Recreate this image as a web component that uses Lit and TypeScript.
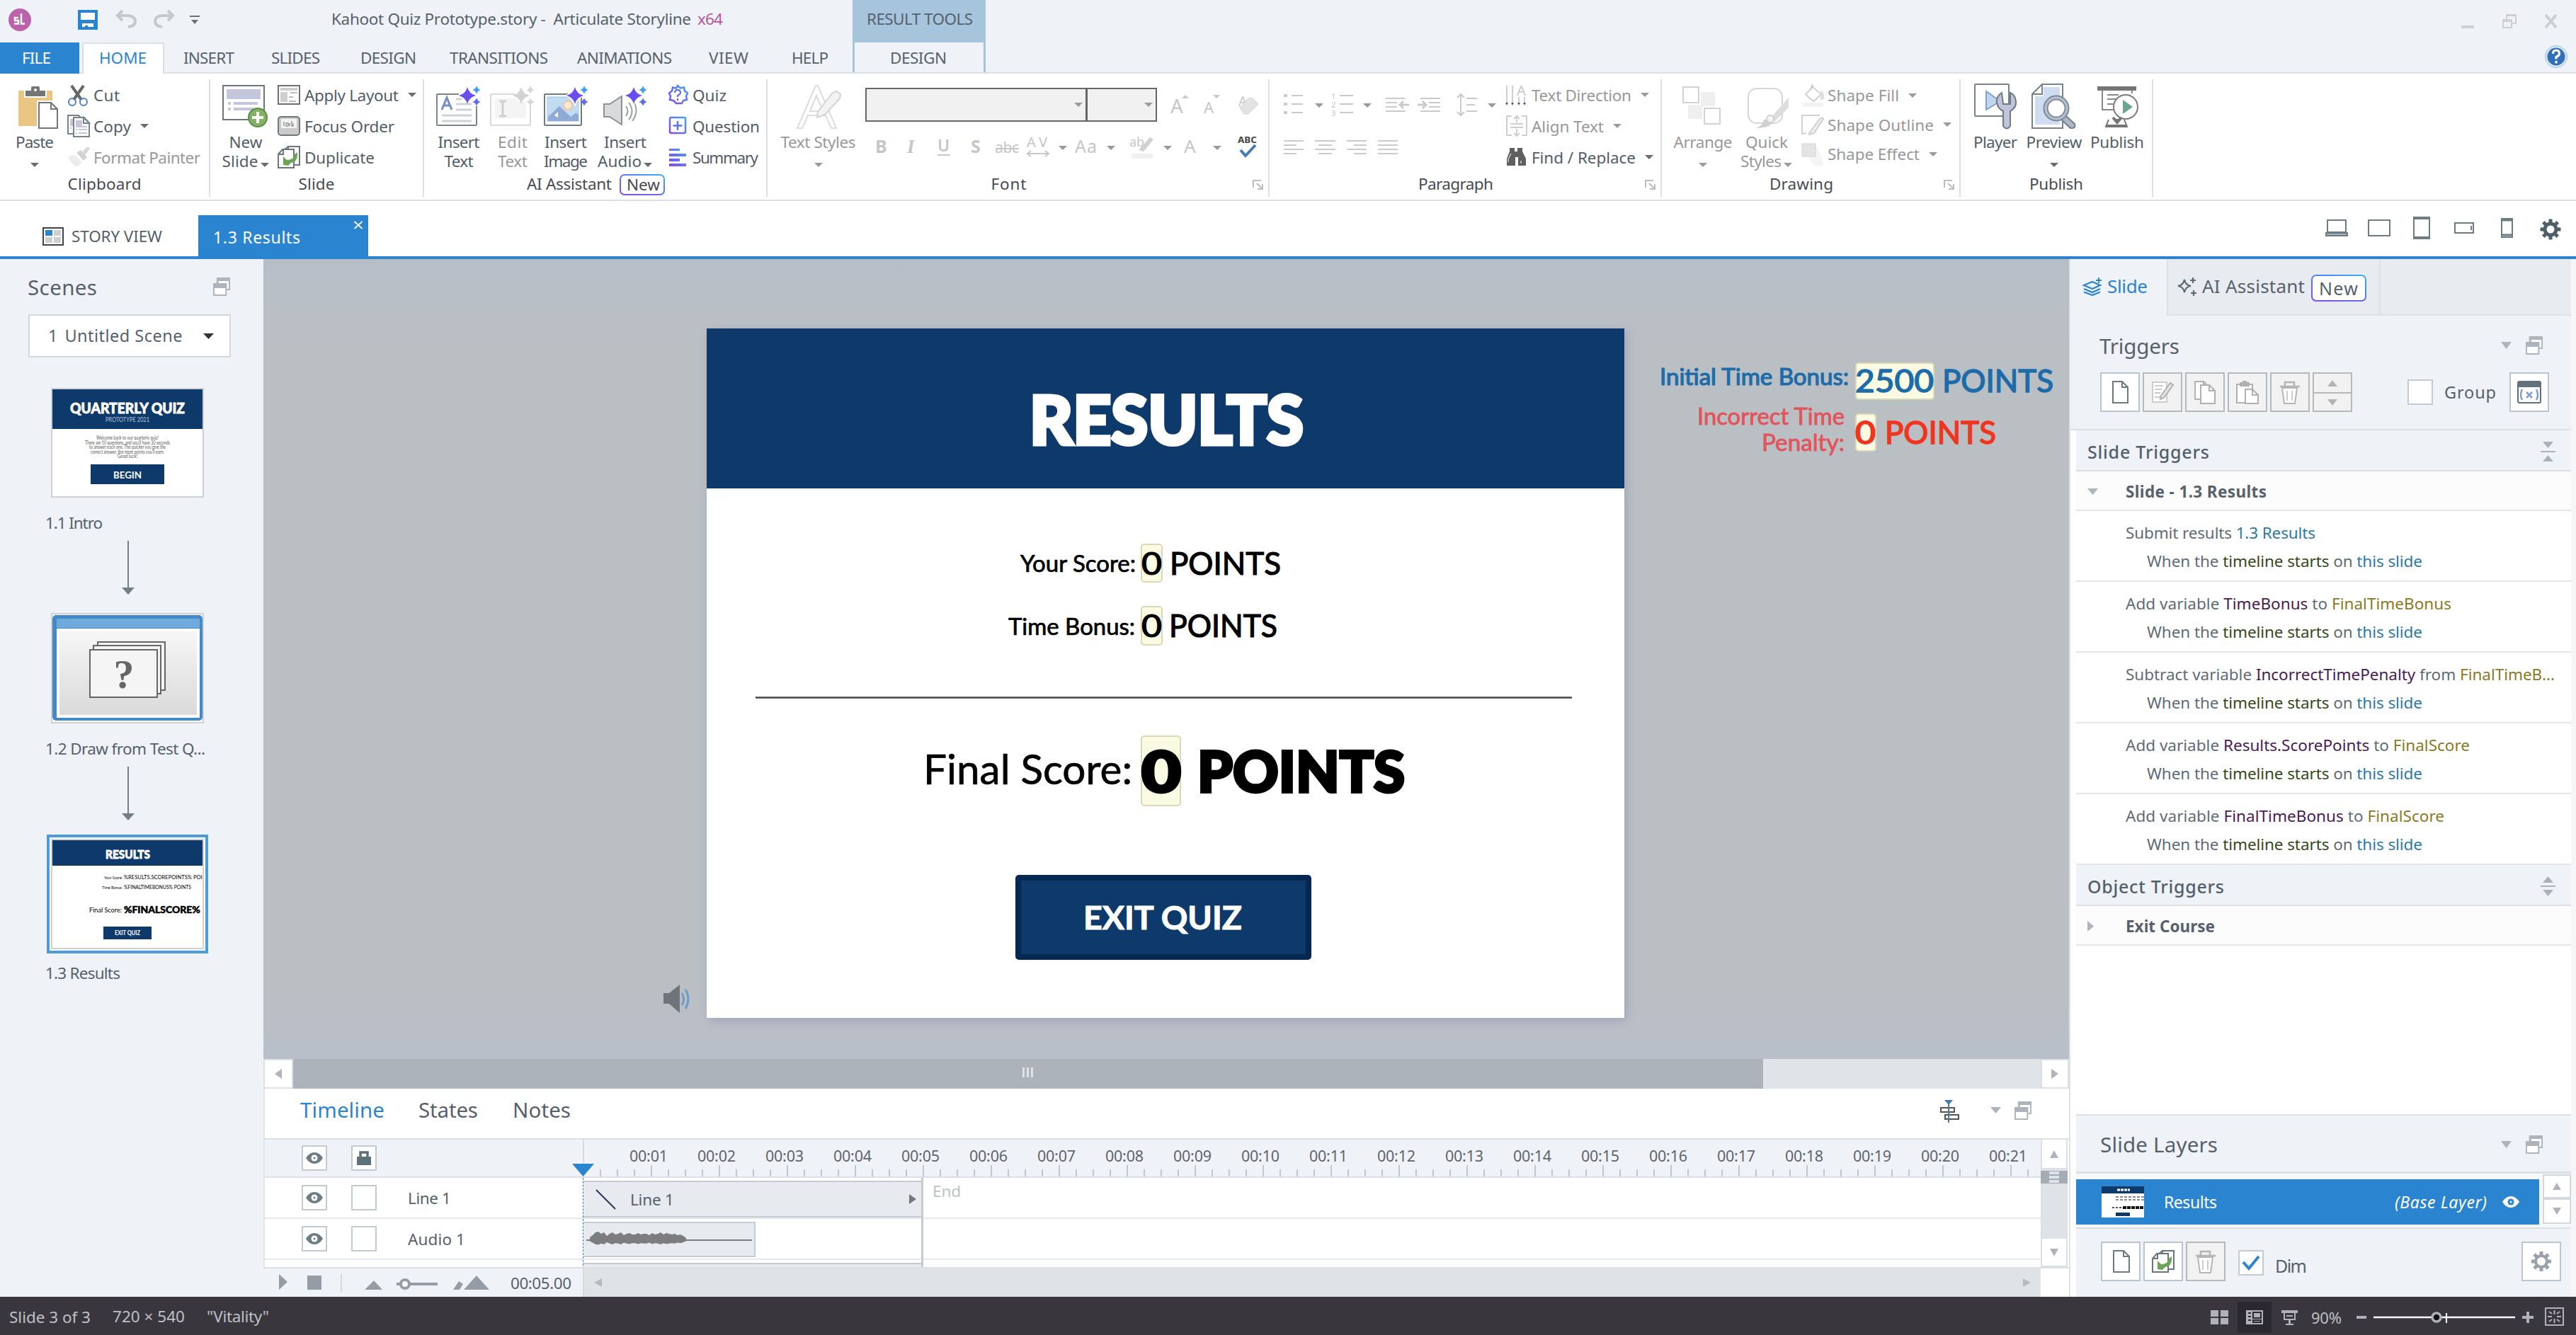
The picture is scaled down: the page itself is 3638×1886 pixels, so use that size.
import { LitElement, html, svg, css, type TemplateResult } from "lit";
import { customElement, property } from "lit/decorators.js";

/** Inline label whose tracking is adjusted so that it fills a given width. */
@customElement("fit-text")
class FitText extends LitElement {
  @property({ type: Number }) w = 0;

  static styles = css`
    :host { display: inline-block; white-space: pre; flex: none; text-indent: -1px; }
  `;

  render() {
    return html`<slot></slot>`;
  }

  updated() {
    const count = (this.textContent ?? "").length;
    if (!this.w || count < 2) return;
    this.style.letterSpacing = "0px";
    this.style.width = "auto";
    const range = document.createRange();
    range.selectNodeContents(this);
    const natural = range.getBoundingClientRect().width;
    this.style.letterSpacing = `${((this.w + 2 - natural) / (count - 1)).toFixed(3)}px`;
    this.style.width = `${this.w}px`;
  }
}

const T = (text: string, w: number, cls = "") =>
  html`<fit-text class=${cls} .w=${w}>${text}</fit-text>`;

/** Icon drawn in the coordinate window (x, y, w, h). */
const ic = (x: number, y: number, w: number, h: number, body: unknown) =>
  html`<svg class="ic" width=${w} height=${h} viewBox="${x} ${y} ${w} ${h}">${body}</svg>`;

const down = (c = "#6b6b6b", w = 12, h = 6) =>
  html`<svg class="ic" width=${w} height=${h} viewBox="0 0 12 6" preserveAspectRatio="none"><path d="M0 0h12l-6 6z" fill=${c} /></svg>`;

const big = (icon: unknown, l1: unknown, l2: unknown = "") =>
  html`<div class="big">${icon}<div class="l1">${l1}</div><div class="l2">${l2}</div></div>`;

const small = (icon: unknown, label: string, w: number, arrow = false, off = false) =>
  html`<div class="small ${off ? "off" : ""}"><span class="si">${icon}</span>${T(label, w)}${arrow ? html`<span class="sa">${down(off ? "#9a9a9a" : "#6b6b6b")}</span>` : ""}</div>`;

const launcher = html`<svg class="ic launcher" width="16" height="14" viewBox="0 0 16 14"><path d="M1 11V1h11M6 5l7 7M14 6v7H7" fill="none" stroke="#bdbdbd" stroke-width="2"/></svg>`;

const star = (x: number, y: number, r: number, fill: string) =>
  svg`<path d="M${x} ${y - r}Q${x + r * 0.2} ${y - r * 0.2} ${x + r} ${y}Q${x + r * 0.2} ${y + r * 0.2} ${x} ${y + r}Q${x - r * 0.2} ${y + r * 0.2} ${x - r} ${y}Q${x - r * 0.2} ${y - r * 0.2} ${x} ${y - r}z" fill=${fill}/>`;

const sparkles = (x: number, off = false) => svg`
  ${star(x, 135, 12, off ? "#d2d2d2" : "#6a4df0")}
  ${star(x + 13, 127, 6, off ? "#d6d6d6" : "#3f9df5")}
  ${star(x + 13, 144, 6, off ? "#d6d6d6" : "#5a6cf3")}`;

const plus = (x: number, y: number) => svg`
  <circle cx=${x} cy=${y} r="13" fill="#83b266" stroke="#5b8f45" stroke-width="2"/>
  <path d="M${x - 8} ${y}h16M${x} ${y - 8}v16" stroke="#fff" stroke-width="4"/>`;

/* ---- ribbon icons ---- */
const iPaste = ic(17, 118, 64, 64, svg`
  <path d="M26 128h48v50H26z" fill="#ebc583"/><path d="M34 126h32v12H34z" fill="#fff"/>
  <path d="M36 128h8v-4q0-2 2-2h8q2 0 2 2v4h8v8H36z" fill="#757575"/><circle cx="50" cy="127" r="2" fill="#fff"/>
  <path d="M52 142h30v40H52z" fill="#fff"/>
  <path d="M55 145h17l9 9v27H55z" fill="#fff" stroke="#757575" stroke-width="2"/><path d="M72 145v9h9" fill="none" stroke="#757575" stroke-width="2"/>`);
const iCut = ic(95, 117, 32, 34, svg`
  <path d="M101 121l14 20M118 121l-14 20" stroke="#666" stroke-width="4"/>
  <circle cx="102" cy="144" r="5" fill="none" stroke="#4d83b8" stroke-width="2"/><circle cx="118" cy="144" r="5" fill="none" stroke="#4d83b8" stroke-width="2"/>`);
const iCopy = ic(94, 162, 34, 36, svg`
  <path d="M95 165h15l6 6v20H95z" fill="#fff" stroke="#75848a" stroke-width="2"/><path d="M98 170h5v10h-5zM98 182h2v2h-2z" fill="#c3c6de"/>
  <path d="M103 168h15l7 8v19h-22z" fill="#fff" stroke="#75848a" stroke-width="2"/><path d="M106 172h9v8h7v2h-16z" fill="#c3c6de"/><path d="M117 168v8h8z" fill="#fff" stroke="#75848a" stroke-width="2"/>
  <path d="M106 185h2M110 185h12M106 190h2M110 190h12" stroke="#c3c6de" stroke-width="2"/>`);
const iPainter = ic(94, 206, 34, 32, svg`
  <path d="M95 221l10-2 10 10-7 7q-8-3-13-15z" fill="#ececec"/><path d="M107 216l6-4 9 10-5 5z" fill="#d2d2d2"/><path d="M114 216l6-7q4-3 6 1l-7 9z" fill="#d8d8d8"/>`);
const iNewSlide = ic(315, 118, 64, 64, svg`
  <rect x="315" y="121" width="58" height="48" fill="#fff" stroke="#68777d" stroke-width="2"/><path d="M320 126h48v14h-48z" fill="#c4c6de"/>
  <path d="M322 146h4M330 146h34M322 154h4M330 154h28" stroke="#c4c6de" stroke-width="4"/>${plus(364, 166)}`);
const iApply = ic(392, 118, 33, 32, svg`
  <rect x="393" y="121" width="30" height="26" fill="#fff" stroke="#6f6f6f" stroke-width="2"/><path d="M396 124h24v4h-24zM396 130h10v14h-10z" fill="#cfcfcf"/><path d="M410 131h10M408 137h6M408 143h10" stroke="#bbb" stroke-width="2"/>`);
const iFocus = ic(392, 162, 33, 32, svg`
  <rect x="393" y="165" width="30" height="26" rx="4" fill="#cbcbcb" stroke="#6e777a" stroke-width="2"/><path d="M397 168h22v13h-22z" fill="#f3f3f3"/><path d="M401 172v6M404 174h3v4h-3zM409 174v4M412 171v7h2v-4" stroke="#9a9a9a" stroke-width="1.5" fill="none"/>`);
const dupBody = (x: number, y: number) => svg`
  <path d="M${x + 15} ${y + 1}h16v26h-16zM${x + 15} ${y + 1}l-5 4" fill="#fff" stroke="#68777d" stroke-width="2"/>
  <path d="M${x + 1} ${y + 12}l6-7h16v26h-22z" fill="#fff" stroke="#68777d" stroke-width="2"/><path d="M${x + 1} ${y + 12}h7v-6" fill="none" stroke="#68777d" stroke-width="2"/>
  <path d="M${x + 8} ${y + 27}v-12l5 5q10 0 11-8l4-3q1 14-9 15l-4 4z" fill="#6fa355"/>`;
const iDup = ic(392, 206, 33, 33, dupBody(392, 206));
const iInsText = ic(616, 118, 64, 64, svg`
  <rect x="617" y="133" width="56" height="44" rx="1" fill="#fff" stroke="#7a868b" stroke-width="2"/><path d="M648 126h30v24h-14l-16-12z" fill="#fff"/><path d="M673 150v6" stroke="#7a868b" stroke-width="2"/>
  <path d="M624 155l7-17 7 17M627 149h9" fill="none" stroke="#7490c2" stroke-width="3"/>
  <path d="M644 140h8M644 147h22M644 155h22M624 163h42M624 171h42" stroke="#cfd2d6" stroke-width="3"/>${sparkles(660)}`);
const iEdit = ic(692, 118, 64, 64, svg`
  <rect x="693" y="133" width="56" height="44" rx="1" fill="#fff" stroke="#d9d9d9" stroke-width="2"/><path d="M699 139h44v28h-44z" fill="#f4f4f4"/><path d="M724 126h28v18h-20z" fill="#fff"/>
  <path d="M705 143h10M710 143v20M705 164h10" stroke="#cfcfcf" stroke-width="3"/>${sparkles(736, true)}`);
const iInsImage = ic(767, 118, 64, 64, svg`
  <rect x="769" y="133" width="52" height="44" rx="1" fill="#fff" stroke="#6d7b80" stroke-width="2"/><rect x="773" y="137" width="44" height="34" fill="#c0dcf2" stroke="#a3c1df"/>
  <circle cx="802" cy="149" r="6" fill="#fdebd6" stroke="#f0c49c" stroke-width="2"/><path d="M774 165l16-15 16 15 8-6 3 4v8h-43z" fill="#8faad6"/><path d="M783 163l5-5v8z" fill="#fff"/>
  ${star(812, 135, 16, "#fff")}${sparkles(812)}`);
const iInsAudio = ic(851, 118, 64, 64, svg`
  <path d="M853 147h8l17-11v40l-17-11h-8z" fill="#d8dadc" stroke="#8d9295" stroke-width="2"/>
  <path d="M884 150q5 7 0 14M888 145q9 12 0 24M893 141q11 15 0 30" fill="none" stroke="#97a2a6" stroke-width="2"/>${star(895, 135, 15, "#fff")}${sparkles(895)}`);
const grad = svg`<defs><linearGradient id="g" x1="0" y1="1" x2="1" y2="0"><stop offset="0" stop-color="#8a46ee"/><stop offset="1" stop-color="#3aa5f6"/></linearGradient></defs>`;
const iQuiz = ic(942, 118, 29, 32, svg`${grad}
  <path d="M956 121l4 3.500 5-1 1 5 4 3-2 4.500 1 5-5 1-2 4-6 0-2 0-4-4-5-1 1-5-2-4.500 4-3 1-5 5 1z" fill="none" stroke="url(#g)" stroke-width="2.500"/>
  <path d="M952 131q0-4 4-4t4 4q0 2-4 4v2M956 139v3" fill="none" stroke="#5a66ee" stroke-width="2"/>`);
const iQuestion = ic(942, 163, 29, 30, svg`${grad}<rect x="945" y="166" width="22" height="22" rx="2" fill="none" stroke="url(#g)" stroke-width="2.500"/><path d="M956 171v13M949.500 177.500h13" stroke="#5b74f0" stroke-width="2.500"/>`);
const iSummary = ic(942, 206, 29, 30, svg`${grad}<path d="M944 209h15v3h-15zM944 216h24v4h-24zM944 223h15v4h-15zM944 230h24v4h-24z" fill="url(#g)"/>`);
const iTextStyles = ic(1123, 118, 64, 64, svg`
  <path d="M1125 181l26-60h3l26 60h-7l-8-18h-25l-8 18zM1143 157h18l-9-22z" fill="#fff" stroke="#dcdcdc" stroke-width="2"/>
  <path d="M1154 158l20-26 6-3 6 4-1 6-21 23-11 4z" fill="#f3f3f3" stroke="#d4d4d4" stroke-width="2"/>`);
const fontTopIcons = ic(1640, 124, 145, 48, svg`
  <g class="glyph"><text x="1653" y="160" font-size="28">A</text><text x="1700" y="160" font-size="22">A</text><text x="1749" y="150" font-size="19">A</text></g>
  <path d="M1669 139l5-5 5 5zM1713 134h10l-5 5z" fill="#c8c8c8"/><path d="M1751 152l12-13 5-1 9 9-14 14h-6z" fill="#e3e3e3" stroke="#d2d2d2"/>`);
const fontRow = ic(1232, 186, 555, 42, svg`
  <g class="glyph"><text x="1236" y="216" font-size="25" font-weight="700">B</text><text x="1281" y="216" font-size="27" font-style="italic" font-weight="700" font-family="Liberation Serif">I</text>
  <text x="1324" y="214" font-size="23" font-weight="600">U</text><text x="1371" y="216" font-size="25" font-weight="700">S</text><text x="1405" y="216" font-size="21" textLength="34">abc</text>
  <text x="1450" y="208" font-size="20" textLength="29">AV</text><text x="1518" y="216" font-size="25" textLength="31">Aa</text><text x="1595" y="207" font-size="18">ab</text><text x="1672" y="216" font-size="26">A</text></g>
  <text x="1748" y="202" font-size="13" font-weight="700" textLength="27" lengthAdjust="spacingAndGlyphs" fill="#444">ABC</text>
  <path d="M1324 219h18M1406 210h33" stroke="#c8c8c8" stroke-width="2"/>
  <path d="M1452 217h28M1456 213l-5 4 5 4M1476 213l5 4-5 4" fill="none" stroke="#c8c8c8" stroke-width="2"/>
  <path d="M1608 212l16-18 5 3-14 17z" fill="#d0d0d0"/><path d="M1598 217h30v7h-30z" fill="#f0f0f0"/>
  <path d="M1495 206h12l-6 6zM1563 206h12l-6 6zM1643 206h12l-6 6zM1713 206h12l-6 6z" fill="#999"/>
  <path d="M1752 212l7 8 14-15" fill="none" stroke="#4a7ab5" stroke-width="4"/>`);
const paraIcons = ic(1805, 118, 321, 110, svg`
  <g stroke="#cbcbcb" stroke-width="2" fill="none">
  <path d="M1824 135h16M1824 147h16M1824 159h16M1892 135h19M1892 147h19M1892 159h19"/>
  <path d="M1813 135h5M1813 147h5M1813 159h5" stroke-width="4"/>
  <path d="M1957 139h28M1957 145h16M1957 151h16M1957 157h28M2006 139h28M2018 145h16M2018 151h16M2006 157h28"/>
  <path d="M1990 148h-12M1982 143l-5 5 5 5M2002 148h12M2009 143l5 5-5 5" stroke-width="3"/>
  <path d="M2063 134v28M2058 138l5-5 5 5M2058 158l5 5 5-5M2071 139h15M2071 148h12M2071 157h15"/>
  <path d="M1813 199h28M1813 205h18M1813 211h28M1813 217h18M1857 199h29M1862 205h19M1857 211h29M1862 217h19M1902 199h28M1912 205h18M1902 211h28M1912 217h18M1946 199h28M1946 205h28M1946 211h28M1946 217h28"/></g>
  <g class="glyph" font-size="11"><text x="1880" y="140">1</text><text x="1880" y="152">2</text><text x="1880" y="164">3</text></g>
  <path d="M1857 146h12l-6 6zM1925 146h12l-6 6zM2101 146h12l-6 6z" fill="#999"/>`);
const iTextDir = ic(2126, 116, 33, 34, svg`<path d="M2128 120v28M2136 120v28M2145 136v12M2153 136v12" stroke="#cfcfcf" stroke-width="2"/><path d="M2126 144l2 4 2-4zM2134 144l2 4 2-4zM2143 144l2 4 2-4zM2151 144l2 4 2-4z" stroke="#cfcfcf"/><g class="glyph"><text x="2142" y="134" font-size="20">A</text></g>`);
const iAlign = ic(2126, 162, 33, 32, svg`<path d="M2135 164h-7v27h7M2149 164h7v27h-7M2142 164v9M2142 182v9M2138 168l4-4 4 4M2138 188l4 4 4-4M2133 175h18M2133 180h18" fill="none" stroke="#cfcfcf" stroke-width="2"/>`);
const iFind = ic(2126, 206, 33, 30, svg`<path d="M2132 208h7v5h4v-5h7v5l5 10v10h-11v-12h-4v12h-12v-10l4-10z" fill="#5f5f5f"/><path d="M2130 228v-4l4-8M2148 226v4" stroke="#fff" fill="none"/>`);
const iArrange = ic(2373, 118, 64, 64, svg`<path d="M2402 130h20v20h-20zM2384 148h20v20h-20z" fill="#efefef"/><rect x="2377" y="123" width="22" height="22" fill="#fff" stroke="#d2d2d2" stroke-width="2"/><rect x="2407" y="153" width="22" height="22" fill="#fff" stroke="#d2d2d2" stroke-width="2"/>`);
const iQuick = ic(2463, 118, 64, 64, svg`<rect x="2469" y="125" width="48" height="49" rx="12" fill="#fff" stroke="#d6d6d6" stroke-width="2"/><path d="M2480 181q10-4 10-10 5-6 12 0 2 9-22 10z" fill="#d0d0d0"/><path d="M2500 167l26-29v14l-20 20z" fill="#ddd"/><circle cx="2500" cy="168" r="5" fill="#f4f4f4" stroke="#d0d0d0" stroke-width="2"/>`);
const iFill = ic(2544, 118, 33, 36, svg`<path d="M2550 134l10-10 12 10-10 10q-6-3-12-10zM2560 124q0-8-3 4" fill="#fff" stroke="#d0d0d0" stroke-width="2"/><path d="M2572 128q6 6 3 14h-4z" fill="#ddd"/><path d="M2545 146h30v6h-30z" fill="#f3f3f3"/>`);
const iOutline = ic(2544, 160, 33, 32, svg`<path d="M2570 163h-25v26l6-1" fill="none" stroke="#d2d2d2" stroke-width="2"/><path d="M2555 188l15-20q4-3 5 0l-13 20-7 2z" fill="#eee" stroke="#d0d0d0" stroke-width="2"/>`);
const iEffect = ic(2544, 200, 33, 36, svg`<path d="M2554 222l10-18 10 20v10h-12z" fill="#f5f5f5"/><rect x="2545" y="203" width="19" height="18" fill="#e4e4e4" stroke="#d4d4d4"/>`);
const iPlayer = ic(2786, 116, 64, 66, svg`<rect x="2789" y="119" width="48" height="45" rx="1" fill="#fff" stroke="#75848a" stroke-width="2"/><path d="M2805 129l20 14-20 12z" fill="#c3d5ee" stroke="#7fa3cf" stroke-width="2"/>
  <path d="M2827 131q-8 5-7 14 2 9 9 12v21q5 7 10 0v-21q9-5 8-14-1-9-8-12v16h-10z" fill="#bfc4d8" stroke="#6f7c86" stroke-width="2"/>`);
const iPreview = ic(2869, 116, 64, 66, svg`<path d="M2884 119h29v62h-43v-48z" fill="#fff" stroke="#75848a" stroke-width="2"/><path d="M2886 123h23v53h-35v-40h12z" fill="#cfdcf1"/><path d="M2884 119v14h-14" fill="none" stroke="#75848a" stroke-width="2"/>
  <path d="M2910 168l7-5 13 12q2 7-6 6z" fill="#aeb5c4" stroke="#75808a" stroke-width="2"/><circle cx="2904" cy="153" r="15" fill="#fff" stroke="#7a8591" stroke-width="7"/><circle cx="2904" cy="153" r="15" fill="none" stroke="#b2bdd0" stroke-width="3.500"/>`);
const iPublish = ic(2958, 116, 64, 66, svg`<path d="M2962 122h55v6h-55z" fill="#757575"/><path d="M2969 128v27h20M3011 128v4M2976 134h16M2976 140h13M2976 147h10" stroke="#888" stroke-width="2" fill="none"/>
  <circle cx="3002" cy="151" r="17" fill="#fff" stroke="#7c7c7c" stroke-width="2"/><path d="M2998 141l14 10-14 10z" fill="#6aa58f"/><path d="M2990 168v6M2984 166l6 7 6-7" stroke="#757575" stroke-width="4" fill="none"/><path d="M2978 169l-4 10h30l-4-10" fill="none" stroke="#757575" stroke-width="2"/><path d="M2974 176h30v4h-30z" fill="#757575"/>`);

/* ---- shared small icons ---- */
const windows = html`<svg class="ic" width="25" height="26" viewBox="0 0 26 26" preserveAspectRatio="none"><path d="M5 0h20v18h-5v-9H5z" fill="#adb4bb"/><path d="M8 5h15v11h-3V8H8z" fill="#fff"/><path d="M0 8h20v18H0z" fill="#adb4bb"/><path d="M2 15h16v9H2z" fill="#fff"/></svg>`;
const eye = (c = "#6b7d84", bg = "#fff") => html`<svg class="ic" width="24" height="16" viewBox="0 0 24 16"><path d="M0 8q5-8 12-8t12 8q-5 8-12 8t-12-8z" fill=${c}/><circle cx="12" cy="8" r="4.500" fill=${bg}/><circle cx="12" cy="8" r="1.500" fill=${c}/></svg>`;
const pageSvg = (c: string, x: number, y: number, w = 19, h = 30) => svg`<path d="M${x} ${y}h${w - 8}l8 8v${h - 8}h${-w}z" fill="#fff" stroke=${c} stroke-width="2"/><path d="M${x + w - 8} ${y}v8h8" fill="none" stroke=${c} stroke-width="2"/>`;
const trash = svg`<path d="M14 20h28M21 19v-5h13v5" fill="none" stroke="#b5b5b5" stroke-width="2.500"/><path d="M17 22l3 22h15l3-22z" fill="#fff" stroke="#b5b5b5" stroke-width="2"/><path d="M24 26v14M31 26v14" stroke="#ccc" stroke-width="2"/>`;
const teeth = [0, 45, 90, 135, 180, 225, 270, 315];
const tri = (d: "l" | "r" | "u" | "d", c = "#adb4bb", a = 10, b = 14) => {
  const p = { l: `M${a} 0v${b}L0 ${b / 2}z`, r: `M0 0v${b}L${a} ${b / 2}z`, u: `M0 ${a}h${b}L${b / 2} 0z`, d: `M0 0h${b}L${b / 2} ${a}z` }[d];
  const h = d === "l" || d === "r";
  return html`<svg class="ic" width=${h ? a : b} height=${h ? b : a}><path d=${p} fill=${c}/></svg>`;
};
const glyphBox = (body: unknown, off = false) => html`<div class="tbtn ${off ? "dis" : ""}"><svg class="ic" width="52" height="52" viewBox="2 2 52 52">${body}</svg></div>`;

const NAVY = "#0d396b";

/* ---- scene thumbnails ---- */
const thumbIntro = html`<svg class="ic clipd" width="212" height="151" viewBox="74 550 212 151">
  <path d="M74 550h212v56H74z" fill=${NAVY}/><g text-anchor="middle" font-family="Lato">
  <text x="180" y="584" font-size="20" font-weight="900" fill="#fff" stroke="#fff" stroke-width=".8" textLength="162" lengthAdjust="spacingAndGlyphs">QUARTERLY QUIZ</text>
  <text x="180" y="596" font-size="9" fill="#b4c3d6" textLength="62" lengthAdjust="spacingAndGlyphs">PROTOTYPE 2021</text>
  <g font-size="8" fill="#555"><text x="180" y="621" textLength="88" lengthAdjust="spacingAndGlyphs">Welcome back to our quarterly quiz!</text><text x="180" y="627.500" textLength="120" lengthAdjust="spacingAndGlyphs">There are 10 questions, and you'll have 30 seconds</text><text x="180" y="634" textLength="108" lengthAdjust="spacingAndGlyphs">to answer each one. The quicker you give the</text><text x="180" y="640.500" textLength="104" lengthAdjust="spacingAndGlyphs">correct answer, the more points you'll earn.</text><text x="180" y="647" textLength="28" lengthAdjust="spacingAndGlyphs">Good luck!</text></g>
  <path d="M128 656h104v28H128z" fill=${NAVY}/><text x="180" y="675.500" font-size="14" font-weight="700" fill="#fff" textLength="40" lengthAdjust="spacingAndGlyphs">BEGIN</text></g></svg>`;
const thumbDraw = html`<svg class="ic clipd" width="212" height="152" viewBox="74 868 212 152"><defs><linearGradient id="dg" x1="0" y1="0" x2="0" y2="1"><stop offset="0" stop-color="#f6f6f6"/><stop offset="1" stop-color="#dadada"/></linearGradient></defs>
  <rect x="74" y="869" width="212" height="149" rx="5" fill="#4389c8"/><path d="M80 874h202v13H80z" fill="#6fabdb"/><path d="M80 888h202v126H80z" fill="#fff"/><path d="M84 892h194v118H84z" fill="url(#dg)"/>
  <g fill="#f5f5f5" stroke="#666" stroke-width="2"><path d="M138 907h95v68h-95z"/><path d="M132 912h95v68h-95z"/><path d="M127 918h95v67h-95z"/></g>
  <text x="175" y="972" text-anchor="middle" font-family="Liberation Serif" font-size="58" font-weight="700" fill="#666">?</text></svg>`;
const thumbResults = html`<svg class="ic clipd" width="212" height="152" viewBox="74 1186 212 152">
  <path d="M74 1186h212v36H74z" fill=${NAVY}/><g font-family="Lato"><text x="149" y="1212" font-size="17" font-weight="900" fill="#fff" stroke="#fff" stroke-width=".8" textLength="63" lengthAdjust="spacingAndGlyphs">RESULTS</text>
  <text x="147" y="1241" font-size="6.500" fill="#000" textLength="26" lengthAdjust="spacingAndGlyphs">Your Score:</text><text x="175" y="1241" font-size="8" fill="#000" textLength="125" lengthAdjust="spacingAndGlyphs">%RESULTS.SCOREPOINTS% POINTS</text>
  <text x="144" y="1254.500" font-size="6.500" fill="#000" textLength="29" lengthAdjust="spacingAndGlyphs">Time Bonus:</text><text x="175" y="1254.500" font-size="8" fill="#000" textLength="95" lengthAdjust="spacingAndGlyphs">%FINALTIMEBONUS% POINTS</text>
  <text x="126" y="1288" font-size="10" fill="#000" textLength="46" lengthAdjust="spacingAndGlyphs">Final Score:</text><text x="175" y="1288.500" font-size="13" font-weight="900" fill="#000" stroke="#000" stroke-width=".5" textLength="162" lengthAdjust="spacingAndGlyphs">%FINALSCORE% POINTS</text>
  <path d="M146 1308h68v18h-68z" fill=${NAVY}/><text x="180" y="1320" text-anchor="middle" font-size="8.500" font-weight="700" fill="#fff" textLength="36" lengthAdjust="spacingAndGlyphs">EXIT QUIZ</text></g></svg>`;
const flowArrow = html`<svg class="ic flow" width="20" height="76"><path d="M10 0v68" stroke="#738083" stroke-width="2"/><path d="M1 66h18l-9 10z" fill="#738083"/></svg>`;

/* ---- stage objects ---- */
const st = (x: number, y: number, w: number, size: number, fill: string, text: string, weight = 400, bold = 0) =>
  svg`<text x=${x} y=${y} textLength=${w} lengthAdjust="spacingAndGlyphs" font-size=${size} font-weight=${weight} fill=${fill} stroke=${fill} stroke-width=${bold}>${text}</text>`;
const ref = (x: number, y: number, w: number, h: number) =>
  svg`<rect x=${x} y=${y} width=${w} height=${h} rx="4" fill="#fbfbe3" stroke="#d9d9b8" stroke-width="2"/>`;
const stage = html`<svg class="stage" width="2550" height="1130" viewBox="372 366 2550 1130"><defs><filter id="sh" x="-5%" y="-5%" width="110%" height="110%"><feDropShadow dx="3" dy="4" stdDeviation="7" flood-color="#8a93b0" flood-opacity=".6"/></filter></defs>
  <g font-family="Lato">
  <path d="M998 464h1296v974H998z" fill="#fff" filter="url(#sh)"/><path d="M998 464h1296v226H998z" fill=${NAVY}/>
  ${st(1454, 628, 387, 95, "#fff", "RESULTS", 900, 5)}
  ${st(1441, 808, 163, 32, "#000", "Your Score:", 400, 0.7)}${ref(1612, 769, 29, 53)}${st(1612, 812, 29, 44, "#000", "0", 400, 1.2)}${st(1652, 812, 157, 45, "#000", "POINTS", 400, 1.2)}
  ${st(1424, 897, 179, 32, "#000", "Time Bonus:", 400, 0.7)}${ref(1612, 857, 29, 54)}${st(1612, 900, 29, 44, "#000", "0", 400, 1.2)}${st(1651, 900, 153, 45, "#000", "POINTS", 400, 1.2)}
  <path d="M1067 985.500h1153" stroke="#444" stroke-width="2.500"/>
  ${st(1304, 1108, 295, 59, "#000", "Final Score:", 400, 0.7)}${ref(1612, 1040, 55, 98)}${st(1612, 1119, 56, 80, "#000", "0", 900, 4)}${st(1691, 1119, 293, 80, "#000", "POINTS", 900, 4)}
  <rect x="1438" y="1240" width="410" height="112" rx="1" fill=${NAVY} stroke="#062850" stroke-width="8"/>
  ${st(1530, 1313, 224, 46, "#fff", "EXIT QUIZ", 700, 1)}
  ${st(2344, 544, 267, 32, "#1d6ca9", "Initial Time Bonus:", 400, 1.2)}${ref(2621, 513, 110, 51)}${st(2620, 554, 111, 45, "#1d6ca9", "2500", 400, 1.5)}${st(2743, 554, 157, 45, "#1d6ca9", "POINTS", 400, 1.5)}
  ${st(2397, 600, 208, 32, "#e2545c", "Incorrect Time", 400, 0.8)}${st(2488, 637, 117, 32, "#e2545c", "Penalty:", 400, 0.8)}
  ${ref(2621, 585, 28, 52)}${st(2620, 627, 29, 45, "#f0351f", "0", 400, 1.8)}${st(2662, 627, 157, 45, "#f0351f", "POINTS", 400, 1.5)}</g>
  <path d="M937 1403h8l15-12v40l-15-13h-8z" fill="#6f7478"/><path d="M963 1403q5 9 0 17M968 1398q8 13 0 27" fill="none" stroke="#6f9cc9" stroke-width="3"/></svg>`;

const tabs: [string, number][] = [["INSERT", 70], ["SLIDES", 67], ["DESIGN", 77], ["TRANSITIONS", 137], ["ANIMATIONS", 132], ["VIEW", 54], ["HELP", 50]];
const triggers: { w: number; verb: string; a: string; mid: string; b: string }[] = [
  { w: 458, verb: "Add variable ", a: "TimeBonus", mid: " to ", b: "FinalTimeBonus" },
  { w: 604, verb: "Subtract variable ", a: "IncorrectTimePenalty", mid: " from ", b: "FinalTimeB..." },
  { w: 484, verb: "Add variable ", a: "Results.ScorePoints", mid: " to ", b: "FinalScore" },
  { w: 448, verb: "Add variable ", a: "FinalTimeBonus", mid: " to ", b: "FinalScore" },
];
const whenLine = html`<div class="when"><fit-text .w=${387}>When the <span class="ev">timeline starts</span> on <span class="lk">this slide</span></fit-text></div>`;

const waveform = (() => {
  const amp = [3, 6, 10, 11, 8, 10, 5, 8, 10, 7, 8, 10, 6, 8, 9, 7, 7, 9, 7, 8, 8, 6, 9, 7, 8, 10, 7, 9, 8, 7, 8, 6, 7, 5, 2];
  const top = amp.map((v, i) => `${833 + i * 4} ${1750 - v}`).join("L");
  const bot = amp.map((v, i) => `${833 + i * 4} ${1751 + v * 0.6}`).reverse().join("L");
  return `M${top}L${bot}z`;
})();

@customElement("app-root")
class AppRoot extends LitElement {
  static styles = css`
    :host { display: block; width: 3638px; height: 1886px; overflow: hidden; background: #fff; color: #56616c; font: 22.5px/27px "Noto Sans", "Open Sans", sans-serif; }
    * { box-sizing: border-box; }
    .ic { display: block; flex: none; overflow: visible; }
    .clipd { overflow: hidden; }
    .glyph { fill: #c6c6c6; }
    .blue { color: #2b84d0; }
    .head { height: 104px; background: #eff3f7; border-bottom: 2px solid #dcdfe3; }
    .title { height: 60px; padding-left: 12px; line-height: 54px; display: grid; grid-template-columns: 98px 54px 54px 50px 201px 517px 218px 188px 1fr 162px; justify-items: start; }
    .title > svg { margin-top: 12px; }
    .x64 { color: #b9569c; }
    .ctx { width: 188px; height: 60px; background: #a6c4dc; padding-left: 21px; }
    .tabs { height: 42px; line-height: 43px; display: grid; grid-template-columns: 116px 144px 124px 126px 126px 180px 186px 117px 85px 188px 1fr 50px; justify-items: start; }
    .file { width: 112px; height: 44px; background: #2b84d0; color: #fff; padding-left: 32px; }
    .home { width: 116px; height: 44px; background: #fff; border: 2px solid #dcdfe3; border-bottom: 0; color: #2b84d0; padding-left: 23px; line-height: 40px; }
    .ctxtab { width: 188px; height: 42px; border: solid #a6c4dc; border-width: 0 3px; padding-left: 51px; }
    .help { margin-top: 2px; }
    .ribbon { height: 180px; display: flex; padding-top: 8px; border-bottom: 2px solid #dcdfe3; }
    .grp { height: 166px; border-right: 2px solid #dcdfe3; display: grid; grid-template-rows: 132px 34px; margin: 0; }
    .gb { display: flex; align-items: flex-start; }
    .gl { position: relative; display: flex; justify-content: center; gap: 12px; line-height: 32px; color: #474b52; align-items: flex-start; }
    .g4 .gl, .g5 .gl, .g6 .gl { padding-right: 26px; }
    .launcher { position: absolute; right: 6px; top: 10px; }
    .g1 { width: 297px; } .g1 .gb { padding-left: 17px; }
    .g2 { width: 302px; } .g2 .gb { padding-left: 18px; } .g2 .big { width: 77px; padding-right: 13px; }
    .g3 { width: 485px; } .g3 .gb { padding-left: 17px; } .g3 .big:nth-child(1) { width: 76px; padding-right: 12px; } .g3 .big:nth-child(2) { width: 75px; padding-right: 11px; } .g3 .big:nth-child(3) { width: 84px; padding-right: 20px; } .g3 .big:nth-child(4) { width: 92px; padding-right: 28px; }
    .g3 .si { width: 36px; } .g3 .gl { padding-left: 3px; }
    .g4 { width: 709px; } .g4 .gb { padding-left: 19px; } .g4 .big { width: 119px; padding-right: 14px; }
    .g5 { width: 554px; } .g5 .gb { padding-left: 12px; }
    .g6 { width: 422px; } .g6 .gb { padding-left: 26px; } .g6 .big:nth-child(1) { width: 90px; padding-right: 26px; } .g6 .big:nth-child(2) { width: 81px; padding-right: 17px; }
    .g6 .small { height: 41.5px; } .g6 .col { padding-top: 2px; }
    .g7 { width: 272px; } .g7 .gb { padding-left: 17px; } .g7 .big:nth-child(1) { width: 83px; padding-right: 19px; } .g7 .big:nth-child(2) { width: 89px; padding-right: 25px; } .g7 .big:nth-child(3) { width: 64px; }
    .g1 .big { width: 78px; padding-right: 14px; }
    .big { display: flex; flex-direction: column; align-items: center; padding-top: 6px; flex: none; color: #525d68; }
    .g7 .big { padding-top: 4px; }
    .l1 { margin-top: 5px; height: 27px; display: flex; }
    .l2 { height: 27px; display: flex; align-items: center; gap: 4px; }
    .l2 .ic { position: relative; top: 5px; }
    .off, .small.off { color: #989898; }
    .small { height: 44px; display: flex; align-items: center; color: #525d68; }
    .si { width: 38px; flex: none; } .g2 .si { width: 39px; }
    .sa { margin-left: 14px; }
    .fontcol { padding-top: 12px; }
    .frow { display: flex; }
    .combo { width: 412px; height: 48px; border: 2px solid #666; background: #f1f1f1; display: grid; grid-template-columns: 309px 1fr; align-items: stretch; }
    .combo span { display: flex; align-items: center; justify-content: flex-end; padding-right: 4px; }
    .combo span + span { border-left: 3px solid #666; }
    .ftop { margin-left: 6px; } .fbot { margin: 14px 0 0 10px; }
    .pcol { padding-top: 6px; width: 321px; flex: none; }
    .new { height: 30px; width: 64px; border: 2px solid transparent; border-radius: 7px; background: linear-gradient(#fff, #fff) padding-box, linear-gradient(20deg, #8a46ee, #5a78f3 50%, #3ab0f6) border-box; line-height: 26px; padding-left: 9px; margin-top: 2px; }
    .docs { height: 82px; border-bottom: 4px solid #2b84d0; display: grid; grid-template-columns: 42px 178px 240px 1fr 354px; padding-left: 60px; align-items: end; line-height: 58px; }
    .docs > .svi { margin-bottom: 15px; }
    .svt { height: 57px; }
    .doc { height: 58px; background: #2b84d0; color: #fff; display: flex; padding: 3px 7px 0 22px; justify-content: space-between; line-height: 56px; font-size: 23px; }
    .doc .ic { margin-top: 5px; }
    .devs { margin-bottom: 22px; }
    .main { height: 1466px; display: grid; grid-template-columns: 372px 2550px 716px; }
    .side { background: #eff3f7; padding-left: 40px; display: flex; flex-direction: column; align-items: flex-start; }
    .sh { height: 78px; width: 286px; display: flex; justify-content: space-between; align-items: center; font-size: 29.500px; padding-bottom: 0; }
    .sel { width: 286px; height: 61px; background: #fff; border: 2px solid #d3d8de; display: flex; align-items: center; padding: 0 22px 0 26px; font-size: 23.500px; }
    .sel fit-text { margin-left: 11px; } .sel .ic { margin-left: auto; }
    .th { border: 2px solid #cfd2d5; margin-left: 32px; width: 216px; background: #fff; }
    .t1 { height: 155px; margin-top: 43px; } .t2 { height: 156px; margin-top: 26px; }
    .t3 { margin: 20px 0 0 26px; width: 228px; height: 168px; border: 4px solid #4c9bdb; background: #fff; padding: 2px; }
    .t3 .th { margin: 0; height: 156px; }
    .tl { margin: 22px 0 0 25px; height: 27px; } .t3 + .tl { margin-top: 14px; }
    .flow { margin: 12px 0 0 131px; }
    .center { display: flex; flex-direction: column; min-width: 0; }
    .canvas { height: 1130px; background: linear-gradient(#b7bec8, #babfc4 10%, #babfc4 92%, #b9bfc9); }
    .stage { display: block; }
    .hs { height: 42px; display: grid; grid-template-columns: 42px 2076px 1fr 40px; background: #dfe4e8; }
    .hs > .b { background: #fff; border: 2px solid #dcdfe3; display: flex; align-items: center; justify-content: center; }
    .hs > .k { background: #adb3bb; display: flex; align-items: center; justify-content: center; padding-bottom: 4px; }
    .tt { height: 72px; border-bottom: 2px solid #dcdfe3; border-left: 2px solid #e3e6ea; display: grid; grid-template-columns: 167px 133px 1fr 71px 34px 77px; padding-left: 51px; font-size: 29.500px; line-height: 60px; }
    .tl-ico { margin-top: 16px; } .tl-dn { margin-top: 26px; } .tl-win { margin-top: 18px; }
    .tbody { height: 180px; display: grid; grid-template-columns: 2510px 38px; }
    .tgrid { display: grid; grid-template-rows: 54px 58px 58px 10px; border-left: 2px solid #e3e6ea; }
    .trow { display: grid; grid-template-columns: 449px 1fr; border-bottom: 2px solid #e6e9ec; }
    .trow.hd { background: #eff3f7; border-color: #dcdfe3; }
    .trow.last { border: 0; overflow: hidden; }
    .cells { display: grid; grid-template-columns: 70px 81px 1fr; padding-left: 52px; align-items: center; }
    .cb { width: 36px; height: 36px; border: 2px solid #c2cbd2; background: #fff; display: flex; align-items: center; justify-content: center; }
    .rul { position: relative; border-left: 2px solid #d6dbe0; color: #60656b; }
    .rlab { display: flex; padding: 9px 0 0 43px; font-size: 21.500px; overflow: hidden; width: 2057px; }
    .rlab span { width: 96px; flex: none; display: flex; justify-content: center; }
    .ticks { position: absolute; left: 0; top: 36px; }
    .play { position: absolute; left: -17px; top: 34px; z-index: 2; }
    .lane { position: relative; border-left: 1.500px dashed #2b84d0; display: flex; align-items: flex-start; }
    .clip { border: 2px solid #c3ccd3; border-left: 0; background: #e7eaef; height: 52px; margin-top: 4px; display: flex; align-items: center; }
    .c1 { width: 480px; padding: 0 8px 0 17px; gap: 22px; } .c1 .ic:last-child { margin-left: auto; }
    .c2 { width: 243px; height: 50px; padding-left: 4px; }
    .c3 { width: 480px; }
    .c1 + .end { margin: 5px 0 0 14px; color: #bcc3ca; }
    .endln { position: absolute; left: 477px; top: 0; height: 60px; border-left: 3px solid #c3ccd3; }
    .vs { border-left: 2px solid #dcdfe3; border-right: 2px solid #dcdfe3; background: #dfe3e8; display: grid; grid-template-rows: 42px 20px 1fr 40px; }
    .vs > div { display: flex; align-items: center; justify-content: center; }
    .vs .b { background: #fff; border-bottom: 2px solid #dcdfe3; }
    .vs .k { background: #a5abb4; margin: 2px -2px 0; }
    .tfoot { height: 42px; border-top: 2px solid #dcdfe3; display: grid; grid-template-columns: 451px 2059px 1fr; background: #eff3f7; }
    .ctl { display: flex; align-items: center; }
    .ctl .tm { margin-left: 30px; }
    .fs { background: #e0e3e5; border-left: 2px solid #d6dadd; display: flex; align-items: center; justify-content: space-between; padding: 0 14px; }
    .corner { background: #fff; }
    .panel { border-left: 2px solid #dfe2e6; border-right: 7px solid #f6f6f8; background: #fff; display: flex; flex-direction: column; }
    .ptabs { height: 80px; display: grid; grid-template-columns: 136px 300px 1fr; font-size: 26px; line-height: 77px; background: #eff3f7; }
    .ptabs > div { display: flex; }
    .ptabs > .idle { background: #e8ebef; border-left: 2px solid #dcdfe3; border-bottom: 2px solid #dcdfe3; }
    .p1 { padding-left: 18px; gap: 9px; } .p1 .ic { margin-top: 26px; } .p2 { padding-left: 13px; gap: 8px; } .p2 .ic { margin-top: 26px; }
    .p2 .new { height: 38px; width: 78px; margin: 22px 0 0 2px; line-height: 34px; font-size: 25px; padding-left: 10px; }
    .pt { height: 80px; background: #eff3f7; display: flex; align-items: center; padding: 4px 39px 0 42px; font-size: 29.500px; }
    .pt .sp { flex: 1; } .pt .ic + .ic { margin-left: 20px; }
    .pb { height: 82px; background: #eff3f7; border-bottom: 2px solid #dcdfe3; display: flex; padding: 0 0 0 42px; gap: 4px; align-items: flex-start; font-size: 23.500px; }
    .tbtn { width: 56px; height: 56px; border: 2px solid #b9c6cf; background: #fff; flex: none; }
    .tbtn.dis { background: #f2f2f2; border-color: #b8b8b8; }
    .ud { width: 56px; height: 56px; border: 2px solid #b8b8b8; background: #f2f2f2; display: grid; grid-template-rows: 1fr 1fr; justify-items: center; align-items: center; }
    .ud > div { width: 52px; height: 100%; display: flex; align-items: center; justify-content: center; } .ud > div + div { border-top: 2px solid #b8b8b8; }
    .gcb { margin: 10px 13px 0 74px; } .gtx { margin: 15px 16px 0 0; }
    .list { padding-left: 8px; height: 966px; }
    .sec { height: 58px; background: #eff3f7; border-bottom: 2px solid #dcdfe3; display: flex; align-items: center; justify-content: space-between; padding: 4px 22px 0 17px; font-size: 25px; font-weight: 500; color: #52606c; }
    .obj { height: 56px; background: #fcfcfd; border-bottom: 2px solid #e3e5e8; display: flex; align-items: center; padding: 2px 0 0 16px; font-weight: 700; }
    .obj fit-text { margin-left: 40px; }
    .obj.col2 fit-text { margin-left: 46px; }
    .trg { height: 100px; border-bottom: 2px solid #e3e5e8; padding: 17px 0 0 71px; color: #5f6b76; }
    .when { margin-top: 13px; padding-left: 30px; }
    .ev { color: #35491b; } .lk { color: #2c79a8; } .va { color: #4a1b54; } .vb { color: #8b7a22; }
    .lay { border-top: 2px solid #dcdfe3; height: 258px; background: #eff3f7; margin-left: 8px; }
    .lt { height: 82px; padding: 2px 39px 0 35px; border-bottom: 3px solid #dcdfe3; }
    .lrow { height: 78px; display: grid; grid-template-columns: 654px 40px; gap: 5px; background: #f7f8fa; border-bottom: 2px solid #dcdfe3; }
    .base { height: 64px; margin-top: 8px; background: #2b84d0; color: #fff; display: grid; grid-template-columns: 89px 326px 151px 1fr; padding-left: 36px; align-items: center; font-size: 23px; }
    .it { font-style: italic; }
    .spin { display: grid; grid-template-rows: 34px 36px; padding-top: 1px; }
    .spin div { background: #fff; border: 2px solid #d3d8de; display: flex; align-items: center; justify-content: center; }
    .lb { padding: 18px 0 0 35px; display: flex; gap: 4px; font-size: 25px; }
    .lb .cb { margin: 12px 13px 0 14px; } .lb .dim { margin: 21px 300px 0 0; }
    .status { height: 54px; background: #39363d; color: #bfc0c6; display: grid; grid-template-columns: 146px 133px 1fr 516px; padding-left: 14px; line-height: 58px; }
    .status .up { line-height: 55px; }
    .sr { display: flex; align-items: center; }
    .sr .act { width: 48px; height: 44px; background: #2b282f; margin: 0 14px 0 13px; display: flex; align-items: center; justify-content: center; }
    .sr fit-text { margin: 0 22px 0 20px; font-size: 22px; }
  `;

  private head(): TemplateResult {
    return html`<div class="head">
      <div class="title">
        <svg class="ic" width="32" height="32"><circle cx="16" cy="16" r="16" fill="#ba63aa"/><path d="M14 13H9v4h5v4.500H8M18 7v14.500h5" fill="none" stroke="#fff" stroke-width="2.500"/></svg>
        ${ic(110, 12, 28, 32, svg`<path d="M112 16h24v24h-24z" fill="#fff" stroke="#2b84d0" stroke-width="4"/><path d="M112 28h24v5h-20v9h-4zM132 31h4v10h-4zM120 36h4v6h-4z" fill="#2b84d0"/>`)}
        ${ic(164, 12, 28, 32, svg`<path d="M166 22h15q10 1 10 8t-10 8M173 15l-7 7 7 7" fill="none" stroke="#c6c8ca" stroke-width="4"/>`)}
        ${ic(218, 12, 28, 32, svg`<path d="M244 22h-15q-10 1-10 8t10 8M237 15l7 7-7 7" fill="none" stroke="#c6c8ca" stroke-width="4"/>`)}
        ${ic(268, 12, 14, 32, svg`<path d="M268 22h14v2h-14zM270 28h10l-5 6z" fill="#707070"/>`)}
        ${T("Kahoot Quiz Prototype.story -  Articulate Storyline", 506)}
        ${T("x64", 34, "x64")}
        <div class="ctx">${T("RESULT TOOLS", 148)}</div><span></span>
        ${ic(3478, 12, 160, 32, svg`<path d="M3478 36h18v4h-18z" fill="#d0d0d0"/><g fill="none" stroke="#cfcfcf" stroke-width="2"><path d="M3542 27v-6h13v12h-6M3542 22h13"/><rect x="3537" y="28" width="12" height="11"/><path d="M3537 30h12"/><path d="M3597 21l15 18M3612 21l-15 18" stroke-width="4"/></g>`)}
      </div>
      <div class="tabs">
        <div class="file">${T("FILE", 39)}</div><div class="home">${T("HOME", 65)}</div>
        ${tabs.map(([t, w]) => T(t, w))}
        <div class="ctxtab">${T("DESIGN", 78)}</div><span></span>
        <svg class="ic help" width="44" height="36"><circle cx="22" cy="18" r="15.500" fill="#dbe8f5" stroke="#9fc0e0"/><circle cx="22" cy="18" r="12.500" fill="#2f6fba"/><path d="M17.500 14q0-5 4.500-5t4.500 4.500q0 3-4.500 5v3M22 24v3.500" fill="none" stroke="#fff" stroke-width="3.200"/></svg>
      </div></div>`;
  }

  private ribbon(): TemplateResult {
    const a = down();
    const g = down("#9a9a9a");
    return html`<div class="ribbon">
      <div class="grp g1"><div class="gb">${big(iPaste, T("Paste", 52), a)}
        <div class="col">${small(iCut, "Cut", 35)}${small(iCopy, "Copy", 51, true)}${small(iPainter, "Format Painter", 149, false, true)}</div></div><div class="gl">${T("Clipboard", 102)}</div></div>
      <div class="grp g2"><div class="gb">${big(iNewSlide, T("New", 45), html`${T("Slide", 49)}${a}`)}
        <div class="col">${small(iApply, "Apply Layout", 131, true)}${small(iFocus, "Focus Order", 125)}${small(iDup, "Duplicate", 97)}</div></div><div class="gl">${T("Slide", 49)}</div></div>
      <div class="grp g3"><div class="gb">${big(iInsText, T("Insert", 57), T("Text", 39))}
        ${big(iEdit, T("Edit", 40, "off"), T("Text", 40, "off"))}${big(iInsImage, T("Insert", 58), T("Image", 60))}${big(iInsAudio, T("Insert", 58), html`${T("Audio", 60)}${a}`)}
        <div class="col">${small(iQuiz, "Quiz", 46)}${small(iQuestion, "Question", 93)}${small(iSummary, "Summary", 91)}</div></div>
        <div class="gl">${T("AI Assistant", 118)}<div class="new">${T("New", 45)}</div></div></div>
      <div class="grp g4"><div class="gb">${big(iTextStyles, T("Text Styles", 104, "off"), g)}
        <div class="fontcol"><div class="frow"><div class="combo"><span>${g}</span><span>${g}</span></div><div class="ftop">${fontTopIcons}</div></div><div class="fbot">${fontRow}</div></div></div>
        <div class="gl">${T("Font", 48)}${launcher}</div></div>
      <div class="grp g5"><div class="gb"><div class="pcol">${paraIcons}</div>
        <div class="col">${small(iTextDir, "Text Direction", 139, true, true)}${small(iAlign, "Align Text", 100, true, true)}${small(iFind, "Find / Replace", 145, true)}</div></div><div class="gl">${T("Paragraph", 104)}${launcher}</div></div>
      <div class="grp g6"><div class="gb">${big(iArrange, T("Arrange", 81, "off"), g)}${big(iQuick, T("Quick", 58, "off"), html`${T("Styles", 56, "off")}${g}`)}
        <div class="col">${small(iFill, "Shape Fill", 99, true, true)}${small(iOutline, "Shape Outline", 148, true, true)}${small(iEffect, "Shape Effect", 128, true, true)}</div></div><div class="gl">${T("Drawing", 88)}${launcher}</div></div>
      <div class="grp g7"><div class="gb">${big(iPlayer, T("Player", 60))}${big(iPreview, T("Preview", 77), a)}${big(iPublish, T("Publish", 74))}</div><div class="gl">${T("Publish", 74)}</div></div>
    </div>`;
  }

  private docs(): TemplateResult {
    return html`<div class="docs">
      <svg class="ic svi" width="30" height="26"><rect x="1" y="1" width="28" height="24" fill="#fff" stroke="#3f4448" stroke-width="2"/><path d="M4 4h10v8H4z" fill="#2b84d0"/><path d="M16 4h10v8H16zM4 14h10v8H4zM16 14h10v8H16z" fill="#cfcfcf"/></svg>
      <div class="svt">${T("STORY VIEW", 126)}</div>
      <div class="doc">${T("1.3 Results", 121)}<svg class="ic" width="14" height="12"><path d="M1.500 1l11 10M12.500 1l-11 10" stroke="#fff" stroke-width="1.800"/></svg></div>
      <span></span>
      <div class="devs">${ic(3284, 306, 354, 34, svg`<g fill="#fff" stroke="#6d7c83" stroke-width="2"><rect x="3287" y="311" width="26" height="17"/><path d="M3285 329h30v4h-30z" fill="#a5b0b4"/><rect x="3345" y="311" width="30" height="22"/><rect x="3409" y="307" width="22" height="30"/><path d="M3409 335h22M3409 309h22"/><rect x="3467" y="315" width="26" height="14"/><path d="M3490 319v6"/><rect x="3533" y="309" width="15" height="26"/><path d="M3533 332h15M3533 311h15" stroke-width="3"/></g>
        <g transform="translate(3602 324)">${teeth.map((r) => svg`<rect x="-2.500" y="-14.500" width="5" height="7" fill="#4d6068" transform="rotate(${r})"/>`)}<circle r="8" fill="#fff" stroke="#4d6068" stroke-width="5"/></g>`)}</div>
    </div>`;
  }

  private side(): TemplateResult {
    return html`<div class="side">
      <div class="sh">${T("Scenes", 96)}${windows}</div>
      <div class="sel"><span>1</span>${T("Untitled Scene", 164)}${tri("d", "#333", 8, 15)}</div>
      <div class="th t1">${thumbIntro}</div><div class="tl">${T("1.1 Intro", 79)}</div>${flowArrow}
      <div class="th t2">${thumbDraw}</div><div class="tl">${T("1.2 Draw from Test Q...", 224)}</div>${flowArrow}
      <div class="t3"><div class="th">${thumbResults}</div></div><div class="tl">${T("1.3 Results", 104)}</div>
    </div>`;
  }

  private center(): TemplateResult {
    const times = Array.from({ length: 21 }, (_, i) => `00:${String(i + 1).padStart(2, "0")}`);
    const ticks = Array.from({ length: 85 }, (_, i) => {
      const major = (i + 1) % 4 === 0;
      return `M${(i + 1) * 24 - 1} ${major ? 0 : 6}V16`;
    }).join("");
    const row = (name: string, w: number, lane: TemplateResult) => html`<div class="trow">
      <div class="cells"><div class="cb">${eye()}</div><div class="cb"></div>${T(name, w)}</div><div class="lane">${lane}<div class="endln"></div></div></div>`;
    return html`<div class="center">
      <div class="canvas">${stage}</div>
      <div class="hs"><div class="b">${tri("l")}</div><div class="k"><svg class="ic" width="16" height="14"><path d="M1.500 0v14M7.500 0v14M13.500 0v14" stroke="#dfe2e6" stroke-width="3"/></svg></div><span></span><div class="b">${tri("r")}</div></div>
      <div class="tt">${T("Timeline", 117, "blue")}${T("States", 82)}${T("Notes", 80)}
        <div class="tl-ico">${ic(2741, 1554, 28, 32, svg`<path d="M2747 1554h12l-6 7z" fill="#4379b5"/><g fill="none" stroke="#555" stroke-width="2"><rect x="2742" y="1565" width="19" height="6"/><rect x="2748" y="1575" width="19" height="6"/></g><path d="M2753 1558v28" stroke="#4379b5" stroke-width="2"/>`)}</div>
        <div class="tl-dn">${tri("d", "#adb4bb", 9, 15)}</div><div class="tl-win">${windows}</div></div>
      <div class="tbody"><div class="tgrid">
        <div class="trow hd"><div class="cells"><div class="cb">${eye()}</div><div class="cb"><svg class="ic" width="20" height="20"><path d="M0 8h20v12H0z" fill="#5f7178"/><path d="M5 9V2h10v7" fill="none" stroke="#5f7178" stroke-width="3.500"/></svg></div></div>
          <div class="rul"><div class="rlab">${times.map((t) => html`<span>${T(t, 52)}</span>`)}</div>
            <svg class="ic ticks" width="2056" height="16"><path d=${ticks} stroke="#c0c8ce" stroke-width="2"/></svg>
            <svg class="ic play" width="31" height="18"><path d="M0 0h31L15.500 18z" fill="#2b84d0"/></svg></div></div>
        ${row("Line 1", 59, html`<div class="clip c1"><svg class="ic" width="28" height="28"><path d="M1 1l27 27" stroke="#1d2f52" stroke-width="1.800"/></svg>${T("Line 1", 60)}${tri("r", "#777", 10, 14)}</div><div class="end">${T("End", 38)}</div>`)}
        ${row("Audio 1", 79, html`<div class="clip c2">${ic(828, 1738, 236, 24, svg`<path d=${waveform} fill="#7d7d7d"/><path d="M828 1751h234" stroke="#7d7d7d" stroke-width="2"/>`)}</div>`)}
        <div class="trow last"><div></div><div class="lane"><div class="clip c3"></div><div class="endln"></div></div></div>
      </div><div class="vs"><div class="b">${tri("u", "#adb4bb", 11, 12)}</div><div class="k"><svg class="ic" width="14" height="16"><path d="M0 2h14M0 8h14M0 14h14" stroke="#dfe2e6" stroke-width="4"/></svg></div><div></div><div class="b">${tri("d", "#adb4bb", 11, 12)}</div></div></div>
      <div class="tfoot"><div class="ctl">${ic(372, 1792, 320, 40, svg`<g fill="#949ca5"><path d="M394 1800v22l12-11zM434 1802h20v20h-20zM515 1822h25l-12-13zM640 1822l8-12 6 4-5 8zM655 1822h36l-18-20z"/><path d="M576 1812h42v4h-42zM560 1812h8v4h-8z"/></g><circle cx="572" cy="1814" r="6" fill="#fff" stroke="#949ca5" stroke-width="4"/><path d="M482 1800v26" stroke="#d4d9de" stroke-width="2"/>`)}<div class="tm">${T("00:05.00", 84)}</div></div>
        <div class="fs">${tri("l", "#b4babf", 11, 12)}${tri("r", "#b4babf", 11, 12)}</div><div class="corner"></div></div>
    </div>`;
  }

  private panel(): TemplateResult {
    const G = "#b0b0b0";
    return html`<div class="panel">
      <div class="ptabs"><div class="p1 blue"><svg class="ic" width="26" height="26"><g fill="none" stroke="#2b84d0" stroke-width="2.200"><path d="M1 11l12-5 11 5-11 5zM1 16l12 5 11-5M1 20.500l12 4.500 11-4.500"/><path d="M22 0v8M18 4h8" stroke-width="2"/></g></svg>${T("Slide", 55)}</div>
        <div class="idle p2"><svg class="ic" width="28" height="26"><path d="M10 3q1.500 8 9 9-7.500 1-9 9-1.500-8-9-9 7.500-1 9-9z" fill="none" stroke="#5b6b72" stroke-width="2.200"/><path d="M22 0v8M18 4h8M23 18v8M19 22h8" stroke="#5b6b72" stroke-width="2.200"/></svg>${T("AI Assistant", 143)}<div class="new">${T("New", 53)}</div></div><div class="idle"></div></div>
      <div class="pt">${T("Triggers", 111)}<span class="sp"></span>${tri("d", "#adb4bb", 10, 15)}${windows}</div>
      <div class="pb">
        ${glyphBox(pageSvg("#6b7a80", 18, 13, 21))}
        ${glyphBox(svg`<path d="M14 14h20v28H14z" fill="#fff" stroke="#ccc" stroke-width="2"/><path d="M17 19h12M17 24h10M17 29h8M17 35h14" stroke="#ccc" stroke-width="2"/><path d="M26 33l13-18 4 3-13 18-5 2z" fill="#e4e4e4" stroke=${G} stroke-width="2"/>`, true)}
        ${glyphBox(svg`${pageSvg(G, 14, 13, 20, 25)}${pageSvg(G, 22, 18, 20, 26)}`, true)}
        ${glyphBox(svg`<path d="M13 17h22v26H13z" fill="#fff" stroke=${G} stroke-width="2"/><path d="M17 14h4v-2h6v2h4v6H17z" fill=${G}/>${pageSvg(G, 25, 24, 18, 20)}`, true)}
        ${glyphBox(trash, true)}
        <div class="ud"><div>${tri("u", "#b3b3b3", 9, 14)}</div><div>${tri("d", "#b3b3b3", 9, 14)}</div></div>
        <div class="cb gcb"></div><div class="gtx">${T("Group", 71)}</div>
        ${glyphBox(svg`<rect x="12" y="13" width="32" height="30" rx="2" fill="#fff" stroke="#62727a" stroke-width="2"/><path d="M12 13h32v8H12z" fill="#62727a"/><path d="M18 24q-4 8 0 15M38 24q4 8 0 15M24 28l8 8M32 28l-8 8" fill="none" stroke="#7f9fda" stroke-width="2.500"/>`)}
      </div>
      <div class="list">
        <div class="sec">${T("Slide Triggers", 170)}<svg class="ic" width="21" height="28"><path d="M3 0h15l-7.500 9zM3 28h15l-7.500-9zM0 13h21v2H0z" fill="#a9b1b9"/></svg></div>
        <div class="obj">${tri("d", "#adb4bb", 9, 15)}${T("Slide - 1.3 Results", 197)}</div>
        <div class="trg"><fit-text .w=${266}>Submit results <span class="lk">1.3 Results</span></fit-text>${whenLine}</div>
        ${triggers.map((t) => html`<div class="trg"><fit-text .w=${t.w}>${t.verb}<span class="va">${t.a}</span>${t.mid}<span class="vb">${t.b}</span></fit-text>${whenLine}</div>`)}
        <div class="sec">${T("Object Triggers", 191)}<svg class="ic" width="21" height="30"><path d="M3 10h15L10.500 1zM3 20h15l-7.500 9zM0 14h21v2H0z" fill="#a9b1b9"/></svg></div>
        <div class="obj col2">${tri("r", "#adb4bb", 9, 15)}${T("Exit Course", 124)}</div>
      </div>
      <div class="lay">
        <div class="pt lt">${T("Slide Layers", 164)}<span class="sp"></span>${tri("d", "#adb4bb", 10, 15)}${windows}</div>
        <div class="lrow"><div class="base">${ic(2968, 1676, 60, 44, svg`<path d="M2968 1676h60v44h-60z" fill="#fff"/><path d="M2968 1676h60v10h-60z" fill=${NAVY}/><path d="M2990 1681h18" stroke="#fff" stroke-width="3" stroke-dasharray="4 1"/><path d="M2988 1691h40M2988 1695h40" stroke="#666" stroke-width="1.500" stroke-dasharray="4 2"/><path d="M2983 1706h14" stroke="#555" stroke-width="2" stroke-dasharray="3 2"/><path d="M2998 1706h30" stroke="#111" stroke-width="4" stroke-dasharray="5 1"/><path d="M2988 1713h20v5h-20z" fill=${NAVY}/>`)}${T("Results", 73)}${T("(Base Layer)", 128, "it")}${eye("#fff", "#2b84d0")}</div>
          <div class="spin"><div>${tri("u", "#adb4bb", 10, 12)}</div><div>${tri("d", "#adb4bb", 10, 12)}</div></div></div>
        <div class="lb">${glyphBox(pageSvg("#6b7a80", 18, 13, 22))}${glyphBox(dupBody(12, 12))}${glyphBox(trash, true)}
          <div class="cb"><svg class="ic" width="26" height="24"><path d="M2 11l8 9L24 3" fill="none" stroke="#2b84d0" stroke-width="4"/></svg></div><div class="dim">${T("Dim", 43)}</div>
          <div class="tbtn"><svg class="ic" width="52" height="52" viewBox="-26 -26 52 52">${teeth.map((r) => svg`<rect x="-2.500" y="-14" width="5" height="7" fill="#9aa1aa" transform="rotate(${r})"/>`)}<circle r="8" fill="#fff" stroke="#9aa1aa" stroke-width="4"/></svg></div></div>
      </div>
    </div>`;
  }

  private status(): TemplateResult {
    return html`<div class="status">${T("Slide 3 of 3", 113)}<div class="up">${T("720 × 540", 100)}</div><div class="up">${T('"Vitality"', 86)}</div>
      <div class="sr"><svg class="ic" width="25" height="20"><path d="M0 0h11v9H0zM14 0h11v9H14zM0 11h11v9H0zM14 11h11v9H14z" fill="#b1b2b9"/></svg>
        <div class="act"><svg class="ic" width="24" height="20"><path d="M0 0h24v20H0z" fill="#b1b2b9"/><path d="M3 4h4M3 9h4M3 14h4" stroke="#2b282f" stroke-width="2"/><path d="M10 3h11v8H10zM10 14h11v3H10z" fill="none" stroke="#2b282f" stroke-width="2"/></svg></div>
        <svg class="ic" width="23" height="21"><path d="M0 0h23v4H0zM10 14h3v5h-3zM6 19h11v2H6z" fill="#b1b2b9"/><path d="M4 4v9h15V4M7 8h9" fill="none" stroke="#b1b2b9" stroke-width="2"/></svg>
        ${T("90%", 41)}
        ${ic(3328, 1838, 294, 44, svg`<path d="M3328 1858h14v4h-14zM3562 1858h16v4h-16zM3568 1852h4v16h-4z" fill="#b1b2b9"/><path d="M3352 1860h200" stroke="#fff" stroke-width="2.500"/><path d="M3455 1854v14" stroke="#fff" stroke-width="2"/><circle cx="3441" cy="1860" r="6" fill="#111" stroke="#b1b2b9" stroke-width="3.500"/>
          <g fill="none" stroke="#b1b2b9" stroke-width="2"><rect x="3595" y="1847" width="25" height="24"/><path d="M3607.500 1850v6M3607.500 1862v6M3598 1859h6M3611 1859h6M3600 1852l4 3M3615 1852l-4 3M3600 1866l4-3M3615 1866l-4-3"/></g>`)}</div>
    </div>`;
  }

  render() {
    return html`${this.head()}${this.ribbon()}${this.docs()}
      <div class="main">${this.side()}${this.center()}${this.panel()}</div>${this.status()}`;
  }
}
